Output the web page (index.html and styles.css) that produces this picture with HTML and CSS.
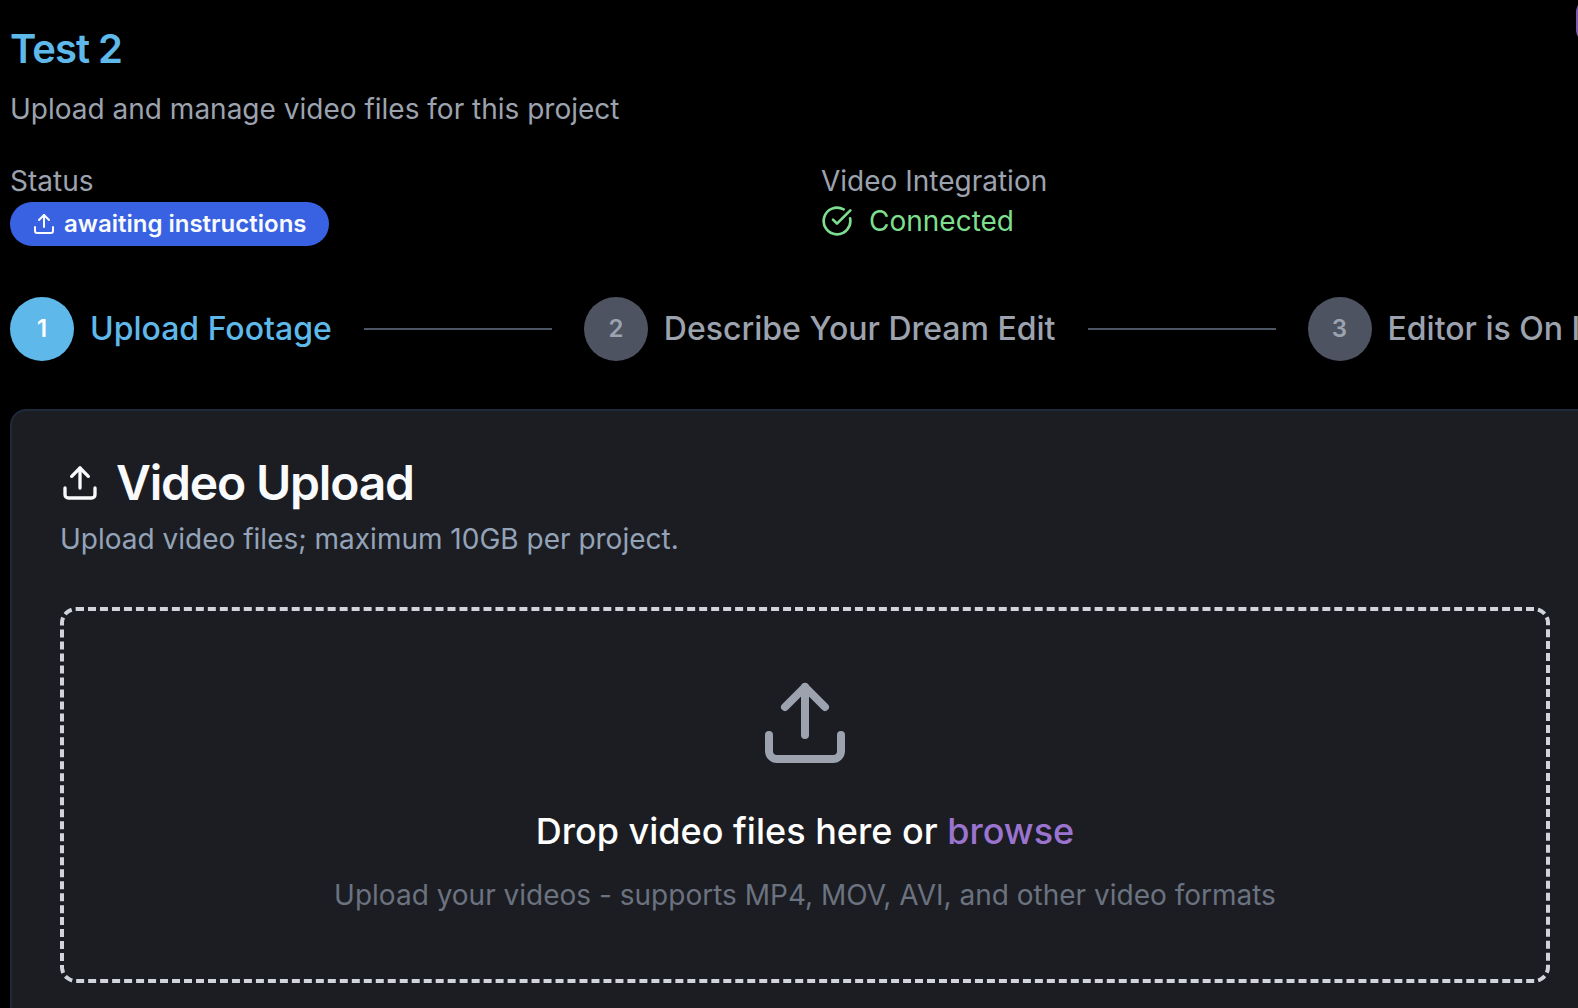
FILE: index.html
```html
<!DOCTYPE html>
<html lang="en">
<head>
<meta charset="utf-8">
<title>Test 2</title>
<link rel="stylesheet" href="styles.css">
</head>
<body>
<svg class="sprite" aria-hidden="true">
  <symbol id="upload" viewBox="0 0 24 24">
    <path d="M21 15v4a2 2 0 0 1-2 2H5a2 2 0 0 1-2-2v-4"/>
    <path d="M17 8l-5-5-5 5"/>
    <path d="M12 3v12"/>
  </symbol>
  <symbol id="check" viewBox="0 0 24 24">
    <path d="M21.801 10A10 10 0 1 1 17 3.335"/>
    <path d="m9 11 3 3L22 4"/>
  </symbol>
</svg>
<main class="page">
  <header class="header">
    <h1 class="title">Test 2</h1>
    <p class="subtitle">Upload and manage video files for this project</p>
    <button class="action" type="button" aria-label="Project action"></button>
  </header>

  <section class="facts">
    <div class="fact">
      <p class="fact-label">Status</p>
      <span class="badge"><svg class="icon icon-badge"><use href="#upload"/></svg>awaiting instructions</span>
    </div>
    <div class="fact">
      <p class="fact-label">Video Integration</p>
      <p class="connected"><svg class="icon icon-check"><use href="#check"/></svg>Connected</p>
    </div>
  </section>

  <ol class="steps">
    <li class="step step-active"><span class="step-number">1</span><span class="step-label">Upload Footage</span></li>
    <li class="step-line" role="presentation"></li>
    <li class="step"><span class="step-number">2</span><span class="step-label">Describe Your Dream Edit</span></li>
    <li class="step-line" role="presentation"></li>
    <li class="step"><span class="step-number">3</span><span class="step-label">Editor is On It</span></li>
  </ol>

  <section class="card">
    <h2 class="card-title"><svg class="icon icon-title"><use href="#upload"/></svg>Video Upload</h2>
    <p class="card-text">Upload video files; maximum 10GB per project.</p>
    <div class="dropzone">
      <svg class="icon icon-drop"><use href="#upload"/></svg>
      <p class="drop-title">Drop video files here or <button class="browse" type="button">browse</button></p>
      <p class="drop-text">Upload your videos - supports MP4, MOV, AVI, and other video formats</p>
    </div>
  </section>
</main>
</body>
</html>
```

FILE: styles.css
```css
* { box-sizing: border-box; margin: 0; padding: 0; }

body {
  background: #000;
  color: #f8fafc;
  font-family: Inter, "Liberation Sans", sans-serif;
  font-size: 28px;
  line-height: 40px;
  overflow: hidden;
}

.sprite { display: none; }

.icon {
  flex: none;
  fill: none;
  stroke: currentColor;
  stroke-width: 2;
  stroke-linecap: round;
  stroke-linejoin: round;
}

/* The content column runs slightly past the right edge of the window. */
.page {
  width: calc(100% + 12px);
  margin-left: 10px;
  padding-top: 21px;
}

.title {
  color: #5eb9ea;
  font-size: 40px;
  font-weight: 600;
  line-height: 56px;
  letter-spacing: -0.025em;
}

.subtitle { margin-top: 12px; color: #9ca3af; }

.action {
  position: absolute;
  top: 0;
  left: calc(100% - 2px);
  width: 200px;
  height: 42px;
  border: 0;
  border-radius: 12px;
  background: #7e5ca9;
}

.facts {
  display: grid;
  grid-template-columns: 1fr 1fr;
  gap: 32px;
  margin-top: 32px;
}

.fact { display: flex; flex-direction: column; align-items: flex-start; }
.fact-label { color: #9ca3af; }

.badge {
  display: flex;
  align-items: center;
  gap: 8px;
  margin-top: 1px;
  padding: 6px 22px;
  border-radius: 22px;
  background: #3962e3;
  font-size: 24px;
  font-weight: 600;
  line-height: 32px;
}

.icon-badge { width: 24px; height: 24px; }

.connected {
  display: flex;
  align-items: center;
  gap: 16px;
  color: #7ddf8e;
}

.icon-check { width: 32px; height: 32px; }

.steps {
  display: flex;
  align-items: center;
  gap: 32px;
  margin-top: 51px;
  list-style: none;
}

.step {
  display: flex;
  flex: none;
  align-items: center;
  gap: 16px;
  color: #9ca3af;
}

.step-active { color: #5eb9ea; }

.step-number {
  display: flex;
  align-items: center;
  justify-content: center;
  width: 64px;
  height: 64px;
  border-radius: 50%;
  background: #4d5361;
  font-size: 24px;
  font-weight: 600;
}

.step-active .step-number { background: #5eb9ea; color: #fff; }
.step-label { font-size: 32px; font-weight: 500; white-space: nowrap; }
.step-line { flex: none; width: 188px; height: 2px; background: #4b5563; }

.card {
  margin-top: 48px;
  padding: 48px;
  border: 2px solid #1e293b;
  border-radius: 16px;
  background: #1c1d22;
}

.card-title {
  display: flex;
  align-items: center;
  gap: 16px;
  font-size: 48px;
  font-weight: 600;
  line-height: 48px;
  letter-spacing: -0.025em;
}

.icon-title { width: 40px; height: 40px; }
.card-text { margin-top: 12px; color: #94a3b8; }

.dropzone {
  display: flex;
  flex-direction: column;
  align-items: center;
  margin-top: 48px;
  padding: 64px;
  border: 4px dashed #d1d5db;
  border-radius: 16px;
  text-align: center;
}

.icon-drop { width: 96px; height: 96px; color: #9ca3af; }

.drop-title {
  margin-top: 32px;
  color: #fff;
  font-size: 36px;
  font-weight: 500;
  line-height: 56px;
}

.browse {
  border: 0;
  background: none;
  color: #9b74cf;
  font: inherit;
  cursor: pointer;
}

.drop-text { margin-top: 16px; color: #6b7280; }
```
